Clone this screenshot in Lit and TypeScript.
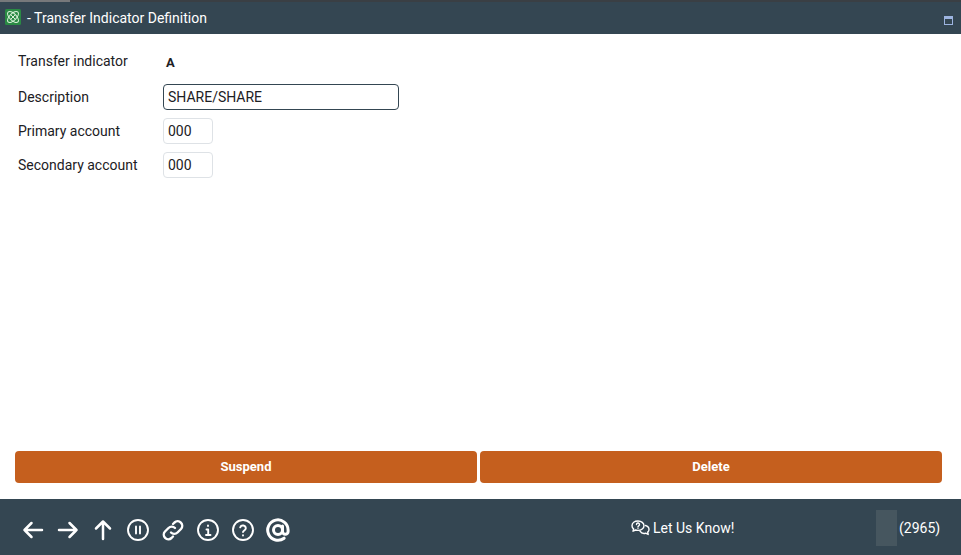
import { LitElement, html, css, svg } from "lit";
import { customElement } from "lit/decorators.js";

const ic = (content: unknown, w = 2.3) => html`<svg class="ic" width="24" height="24" viewBox="0 0 24 24" fill="none" stroke="#fff" stroke-width="${w}" stroke-linecap="round" stroke-linejoin="round">${content}</svg>`;

@customElement("app-root")
export class AppRoot extends LitElement {
  static styles = css`
    :host { display: flex; flex-direction: column; width: 961px; height: 555px; background: #fff; font-family: Roboto, "Liberation Sans", sans-serif; font-size: 14px; color: #1c2024; overflow: hidden; }
    .strip { height: 2px; background: #3a3f44; flex: none; }
    .strip div { width: 70px; height: 2px; background: #77797b; }
    .title { height: 32px; box-sizing: border-box; padding: 0 8px 1px 5px; flex: none; background: #344652; color: #fff; display: flex; align-items: center; gap: 6px; }
    .title .t { flex: 1; font-size: 14px; }
    .logo { width: 16px; height: 16px; display: block; margin-top: -1px; }
    .max { width: 9px; height: 9px; box-sizing: border-box; border: 1px solid #9db4e0; border-top-width: 3px; margin-top: 6px; }
    .main { flex: 1; display: flex; flex-direction: column; padding: 10px 19px 16px 15px; min-height: 0; }
    .row { display: flex; align-items: center; padding-left: 3px; margin-bottom: 8px; }
    .row.first { height: 34px; margin-bottom: 6px; }
    .lbl { width: 145px; flex: none; }
    .val { font-weight: 700; font-size: 13px; padding: 3px 0 0 3px; }
    .inp { box-sizing: border-box; height: 26px; border: 1px solid #dee2e6; border-radius: 4px; padding: 0 4px; display: flex; align-items: center; color: inherit; font: inherit; background: #fff; }
    .sm { width: 50px; }
    .lg { width: 236px; border-color: #344652; }
    .btns { margin-top: auto; display: flex; gap: 3px; }
    .btn { flex: 1; height: 32px; border: 0; border-radius: 4px; padding: 0 0 2px; background: #c55f1e; color: #fff; font: 700 13px Roboto, "Liberation Sans", sans-serif; }
    .foot { height: 56px; flex: none; background: #344652; color: #fff; display: flex; align-items: center; position: relative; padding-left: 21px; }
    .icons { display: flex; align-items: center; gap: 11px; flex: none; padding-top: 6px; }
    .ic { display: block; }
    .know { position: absolute; left: 631px; top: 1px; height: 56px; display: flex; align-items: center; gap: 3px; font-size: 14px; }
    .count { position: absolute; left: 876px; top: 11px; height: 36px; display: flex; align-items: center; gap: 2px; }
    .sq { width: 21px; height: 36px; background: #46565f; }
    .n { font-size: 14px; }
  `;

  render() {
    return html`
      <div class="strip"><div></div></div>
      <div class="title">
        <svg class="logo" viewBox="0 0 16 16">
          <rect width="16" height="16" rx="1.5" fill="#2a8a44"/>
          <g fill="none" stroke="#d8efd8" stroke-width="1">
            <ellipse cx="8" cy="8" rx="7" ry="3.4" transform="rotate(45 8 8)"/>
            <ellipse cx="8" cy="8" rx="7" ry="3.4" transform="rotate(-45 8 8)"/>
            <path d="M6 6l4 4M10 6l-4 4"/>
          </g>
        </svg>
        <span class="t">- Transfer Indicator Definition</span>
        <div class="max"></div>
      </div>
      <div class="main">
        <div class="row first"><span class="lbl">Transfer indicator</span><span class="val">A</span></div>
        <div class="row"><span class="lbl">Description</span><div class="inp lg">SHARE/SHARE</div></div>
        <div class="row"><span class="lbl">Primary account</span><div class="inp sm">000</div></div>
        <div class="row"><span class="lbl">Secondary account</span><div class="inp sm">000</div></div>
        <div class="btns"><button class="btn">Suspend</button><button class="btn">Delete</button></div>
      </div>
      <div class="foot">
        <div class="icons">
          ${ic(svg`<path d="M21 12H3.500M10.500 5l-7 7 7 7"/>`, 2.5)}
          ${ic(svg`<path d="M3 12h17.500M13.500 5l7 7-7 7"/>`, 2.5)}
          ${ic(svg`<path d="M12 21V3.500M5 10.500l7-7 7 7"/>`, 2.5)}
          ${ic(svg`<circle cx="12" cy="12" r="10"/><path d="M10 8.500v7M14 8.500v7"/>`, 1.9)}
          ${ic(svg`<path d="M10 14.500a4.500 4.500 0 0 0 6.500 0l3.500-3.500a4.600 4.600 0 0 0-6.500-6.500l-1.500 1.500"/><path d="M14 10a4.500 4.500 0 0 0-6.500 0L4 13.500a4.600 4.600 0 0 0 6.500 6.500l1.500-1.500"/>`, 2.4)}
          ${ic(svg`<circle cx="12" cy="12" r="10"/><path d="M12 7.500v.5M10.500 11.500H12.200V17M10 17h4.500"/>`, 1.9)}
          ${ic(svg`<circle cx="12" cy="12" r="10"/><path d="M9.200 9.300a2.900 2.900 0 0 1 5.600.9c0 1.900-2.800 2.400-2.800 3.900M12 17.300v.2"/>`, 1.9)}
          ${ic(svg`<circle cx="12" cy="12" r="4.500"/><path d="M16.500 8v5.500a2.800 2.800 0 0 0 5.600 0V12a10.200 10.200 0 1 0-4 8.200"/>`, 3)}
        </div>
        <div class="know">
          <svg width="19" height="16" viewBox="0 0 19 16" fill="none" stroke="#fff" stroke-width="1.400" stroke-linecap="round" stroke-linejoin="round">
            <path d="M7 1C3.600 1 1 3 1 5.700c0 1.300.6 2.400 1.600 3.200L2 11.200l2.600-1.200c.8.3 1.600.4 2.400.4 3.400 0 6-2.100 6-4.700S10.400 1 7 1z"/>
            <path d="M5.500 4.500a1.500 1.500 0 1 1 2.200 1.300c-.5.3-.7.6-.7 1M7 8.200v.1"/>
            <path d="M14.500 5.500c2 .5 3.500 2 3.500 3.900 0 1.100-.5 2-1.300 2.700l.5 2.400-2.500-1.300c-2 .5-4.500-.1-5.700-2"/>
          </svg>
          <span>Let Us Know!</span>
        </div>
        <div class="count"><div class="sq"></div><span class="n">(2965)</span></div>
      </div>
    `;
  }
}
